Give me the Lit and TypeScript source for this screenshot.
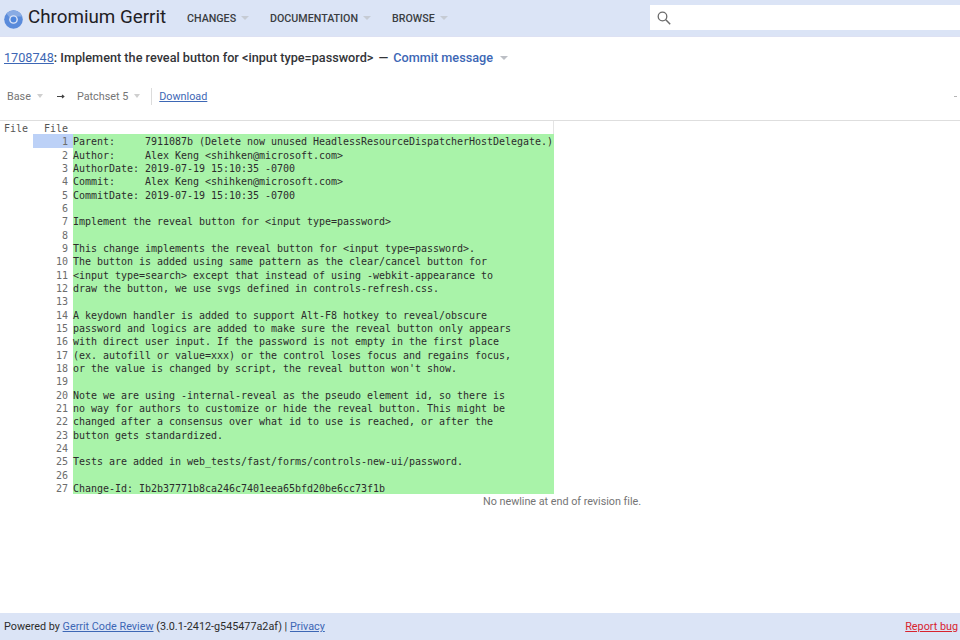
import { LitElement, html, css } from "lit";
import { customElement } from "lit/decorators.js";

const LINES = [
  "Parent:     7911087b (Delete now unused HeadlessResourceDispatcherHostDelegate.)",
  "Author:     Alex Keng <shihken@microsoft.com>",
  "AuthorDate: 2019-07-19 15:10:35 -0700",
  "Commit:     Alex Keng <shihken@microsoft.com>",
  "CommitDate: 2019-07-19 15:10:35 -0700",
  "",
  "Implement the reveal button for <input type=password>",
  "",
  "This change implements the reveal button for <input type=password>.",
  "The button is added using same pattern as the clear/cancel button for",
  "<input type=search> except that instead of using -webkit-appearance to",
  "draw the button, we use svgs defined in controls-refresh.css.",
  "",
  "A keydown handler is added to support Alt-F8 hotkey to reveal/obscure",
  "password and logics are added to make sure the reveal button only appears",
  "with direct user input. If the password is not empty in the first place",
  "(ex. autofill or value=xxx) or the control loses focus and regains focus,",
  "or the value is changed by script, the reveal button won't show.",
  "",
  "Note we are using -internal-reveal as the pseudo element id, so there is",
  "no way for authors to customize or hide the reveal button. This might be",
  "changed after a consensus over what id to use is reached, or after the",
  "button gets standardized.",
  "",
  "Tests are added in web_tests/fast/forms/controls-new-ui/password.",
  "",
  "Change-Id: Ib2b37771b8ca246c7401eea65bfd20be6cc73f1b",
];

@customElement("app-root")
export class AppRoot extends LitElement {
  static styles = css`
    :host { display: flex; flex-direction: column; height: 640px; width: 960px; overflow: hidden; background: #fff; font-family: Roboto, sans-serif; color: #212121; }
    a { color: #3d67b5; }
    .header { height: 37px; box-sizing: border-box; background: #dbe4f6; border-bottom: 1px solid #dde1f3; display: flex; align-items: center; flex: none; padding-left: 4px; }
    .logo { width: 19px; height: 19px; margin-top: 3px; flex: none; }
    .title { font-size: 18.8px; color: #1f2024; margin-left: 5px; width: 136px; white-space: nowrap; position: relative; top: -1px; }
    .nav { display: flex; align-items: center; font-size: 10.7px; font-weight: 500; color: #3a3d42; }
    .nav span.item { display: flex; align-items: center; }
    .c1 { margin-left: 23px; width: 83px; }
    .c2 { width: 122px; }
    .caret { width: 0; height: 0; border-left: 4px solid transparent; border-right: 4px solid transparent; border-top: 4px solid #c6cbd4; margin-left: 5px; flex: none; }
    .search { margin-left: auto; width: 310px; height: 25px; background: #fff; display: flex; align-items: center; padding-left: 6px; box-sizing: border-box; margin-top: -1px; }
    .search svg { width: 16px; height: 16px; }
    .subject { height: 41px; flex: none; display: flex; align-items: center; padding-left: 4px; font-size: 12.68px; font-weight: 500; color: #333438; white-space: nowrap; }
    .subject .num { font-weight: 400; }
    .subject .dash { margin: 0 5px 0 5px; }
    .subject .cm { color: #3d67b5; }
    .subject .caret2 { border-top-color: #bcbfc5; border-left-width: 4.5px; border-right-width: 4.5px; border-top-width: 4.5px; margin-left: 7px; }
    .bar { flex: none; box-sizing: border-box; display: flex; align-items: center; font-size: 10.8px; color: #757575; padding: 0 0 6px 7px; border-bottom: 1px solid #dedede; height: 43px; }
    .bar .caret { border-top-color: #cfcfcf; border-left-width: 3.5px; border-right-width: 3.5px; margin-left: 6px; }
    .arrow { margin: 0 12px 0 13px; width: 9px; height: 7px; flex: none; }
    .sep { width: 1px; height: 17px; background: #dcdcdc; margin: 0 7px 0 11px; }
    .tick { margin-left: auto; width: 3px; height: 1px; background: #b5b5b5; margin-right: 3px; }
    .diff { flex: 1; font-family: "DejaVu Sans Mono", monospace; font-size: 10px; letter-spacing: -0.02px; color: #2c2c2c; }
    .grid { display: grid; grid-template-columns: 33px 35px 5px 481px; grid-auto-rows: 13.333px; line-height: 13.333px; white-space: pre; }
    .grid > span { padding-top: 1px; box-sizing: border-box; }
    .fl { color: #555; }
    .fl.left { padding-left: 4px; }
    .fl.right { text-align: right; }
    .rule { grid-column: 4; border-right: 1px solid #e4e4e4; }
    .ln { grid-column: 2; text-align: right; color: #6d6d6d; }
    .sel { background: #bcd1f7; }
    .code { grid-column: 4; background: #a9f3a9; }
    .note { flex: none; margin-left: 483px; margin-top: 1px; font-family: Roboto, sans-serif; font-size: 10.8px; line-height: 14px; color: #757575; }
    .footer { height: 27px; flex: none; background: #dbe4f6; display: flex; align-items: center; justify-content: space-between; padding: 0 2px 0 4px; font-size: 10.8px; color: #2c2c2c; }
    .footer .bug { color: #d8232f; }
  `;

  render() {
    return html`
      <div class="header">
        <svg class="logo" viewBox="0 0 20 20">
          <circle cx="10" cy="10" r="9.8" fill="#5a8bdb"/>
          <path d="M2.6 3.8A9.8 9.8 0 0 1 19.2 6.8L10 6.8A3.3 3.3 0 0 0 6.8 9.2Z" fill="#88abe4"/>
          <circle cx="10" cy="10" r="4.6" fill="#dbe4f6"/>
          <circle cx="10" cy="10" r="3.1" fill="#4f86dc"/>
        </svg>
        <span class="title">Chromium Gerrit</span>
        <div class="nav">
          <span class="item c1">CHANGES<i class="caret"></i></span>
          <span class="item c2">DOCUMENTATION<i class="caret"></i></span>
          <span class="item">BROWSE<i class="caret"></i></span>
        </div>
        <div class="search">
          <svg viewBox="0 0 16 16" fill="none" stroke="#6b6b6b">
            <circle cx="6.5" cy="6.5" r="4.3" stroke-width="1.3"/>
            <path d="M9.8 9.8l4.4 4.4" stroke-width="1.5"/>
          </svg>
        </div>
      </div>
      <div class="subject">
        <a class="num" href="#">1708748</a>: Implement the reveal button for &lt;input type=password&gt;
        <span class="dash">—</span>
        <span class="cm">Commit message</span>
        <i class="caret caret2"></i>
      </div>
      <div class="bar">
        <span>Base</span><i class="caret"></i>
        <svg class="arrow" viewBox="0 0 9 7"><path d="M1 3.5h6.5M6 2l1.8 1.5L6 5" fill="none" stroke="#444" stroke-width="1.2"/></svg>
        <span>Patchset 5</span><i class="caret"></i>
        <span class="sep"></span>
        <a href="#">Download</a>
        <span class="tick"></span>
      </div>
      <div class="diff">
        <div class="grid">
          <span class="fl left">File</span><span class="fl right">File</span><span></span><span class="rule"></span>
          ${LINES.map(
            (l, i) => html`<span></span><span class="ln ${i === 0 ? "sel" : ""}">${i + 1}</span><span class="${i === 0 ? "sel" : ""}"></span><span class="code">${l}</span>`
          )}
        </div>
        <div class="note">No newline at end of revision file.</div>
      </div>
      <div class="footer">
        <span>Powered by <a href="#">Gerrit Code Review</a> (3.0.1-2412-g545477a2af) | <a href="#">Privacy</a></span>
        <a class="bug" href="#">Report bug</a>
      </div>
    `;
  }
}
